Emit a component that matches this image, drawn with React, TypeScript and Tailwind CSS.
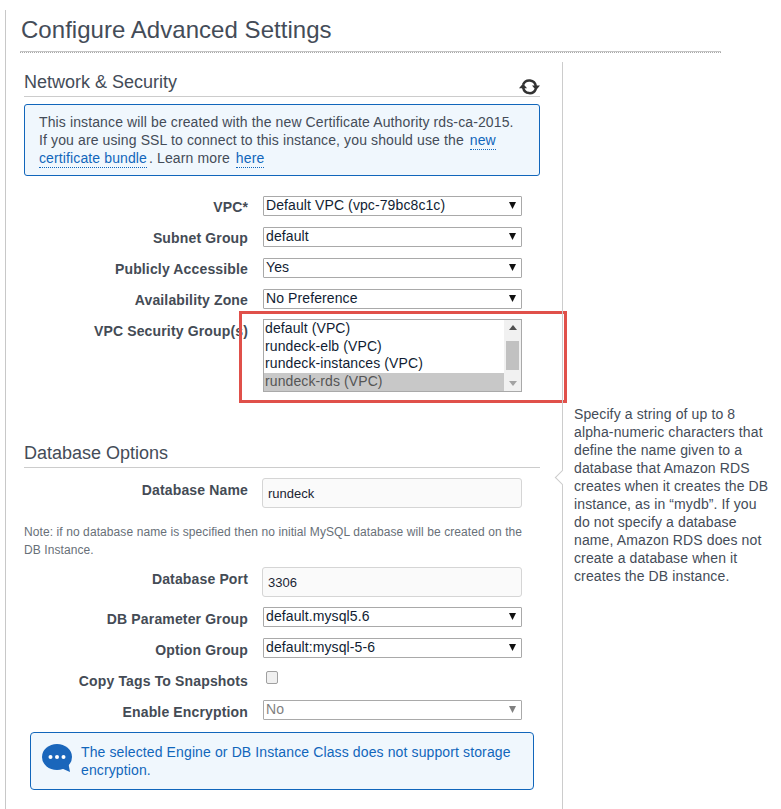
const Caret = ({ disabled }: { disabled?: boolean }) => (
  <svg width="7" height="7" viewBox="0 0 7 7" className="mb-[2px] shrink-0">
    <path d="M0 0h7L3.5 7z" fill={disabled ? "#808080" : "#111111"} />
  </svg>
);

const Select = ({ value, disabled }: { value: string; disabled?: boolean }) => (
  <div
    className={`flex h-[20px] w-[259px] items-center justify-between rounded-[1px] border border-[#a9a9a9] bg-white pl-[2px] pr-[5px] text-[14px] leading-[16px] tracking-[0.1px] ${
      disabled ? "text-[#808080]" : "text-[#111d33]"
    }`}
  >
    <span className="-mt-[2px]">{value}</span>
    <Caret disabled={disabled} />
  </div>
);

const Row = ({
  label,
  children,
  top,
  raised,
}: {
  label: string;
  children: React.ReactNode;
  top?: boolean;
  raised?: boolean;
}) => (
  <div className={`flex gap-[15px] ${top ? "items-start" : "items-center"}`}>
    <div
      className={`h-[20px] w-[224px] text-right text-[14px] font-bold tracking-[0.15px] text-[#444b55] ${
        raised ? "leading-[22px]" : "leading-[24px]"
      }`}
    >
      {label}
    </div>
    {children}
  </div>
);

const TextInput = ({ value }: { value: string }) => (
  <div className="-ml-px flex h-[30px] w-[260px] items-center rounded-[3px] border border-[#d5d5d5] bg-[#fafafa] px-[5px] pt-[2px] text-[13px] text-[#1a2433]">
    {value}
  </div>
);

const Heading = ({ title, icon }: { title: string; icon?: React.ReactNode }) => (
  <div className="flex items-end justify-between border-b border-[#cccccc] pb-[2px]">
    <h2 className="text-[18px] font-normal leading-[24px] text-[#444c58]">{title}</h2>
    {icon}
  </div>
);

const RefreshIcon = () => (
  <svg width="21" height="18" viewBox="0 0 21 18" className="-mb-[2px] shrink-0">
    <path d="M4.2 6.5A6.6 6.6 0 0 1 16.8 8" fill="none" stroke="#333333" strokeWidth="2.5" />
    <path d="M16.8 11A6.6 6.6 0 0 1 4.2 9.8" fill="none" stroke="#333333" strokeWidth="2.5" />
    <path d="M13 7.6h8l-4 4.6z" fill="#333333" />
    <path d="M0 10.2h8L4 5.6z" fill="#333333" />
  </svg>
);

const securityGroups = ["default (VPC)", "rundeck-elb (VPC)", "rundeck-instances (VPC)"];

const linkClass = "border-b border-dotted border-[#1166bb] pb-[1px] text-[#1166bb]";

export default function App() {
  return (
    <div
      className="relative h-[809px] w-[781px] overflow-hidden bg-white"
      style={{ fontFamily: '"Liberation Sans", Arial, sans-serif' }}
    >
      <div className="ml-[5px] h-[799px] translate-y-[10px] border-l border-[#c8c8c8]">
        <div className="ml-[14px] w-[701px] border-b border-dotted border-[#a8a8a8]">
          <div className="border-b border-[#c4c4c4] pl-[1px] pt-[5px] pb-[6px]">
            <h1 className="text-[24px] font-normal leading-[30px] tracking-[0.04px] text-[#444c58]">
              Configure Advanced Settings
            </h1>
          </div>
        </div>

        <div className="ml-[18px] mt-[9px] flex">
          {/* Form column */}
          <div className="w-[516px] pt-[8px]">
            <Heading title="Network & Security" icon={<RefreshIcon />} />

            <div className="mt-[7px] rounded-[3px] border border-[#1166bb] bg-[#f0f7fd] px-[14px] py-[8px] text-[14px] leading-[18px] tracking-[0.12px] text-[#444c58]">
              This instance will be created with the new Certificate Authority rds-ca-2015.
              <br />
              If you are using SSL to connect to this instance, you should use the{" "}
              <a className={`ml-[2px] ${linkClass}`}>new</a>
              <br />
              <a className={linkClass}>certificate bundle</a>
              <span className="ml-[2px]">. Learn more</span> <a className={`ml-[2px] ${linkClass}`}>here</a>
            </div>

            <div className="mt-[20px] flex flex-col gap-[11px]">
              <Row label="VPC*" raised>
                <Select value="Default VPC (vpc-79bc8c1c)" />
              </Row>
              <Row label="Subnet Group" raised>
                <Select value="default" />
              </Row>
              <Row label="Publicly Accessible" raised>
                <Select value="Yes" />
              </Row>
              <Row label="Availability Zone" raised>
                <Select value="No Preference" />
              </Row>
            </div>

            <div className="relative mt-[10px]">
              <Row label="VPC Security Group(s)" top>
                <div className="flex h-[73px] w-[259px] border border-[#a9a9a9] bg-white">
                  <div className="min-w-0 flex-1 text-[14px] leading-[17px] tracking-[0.1px] text-[#111d33]">
                    {securityGroups.map((group) => (
                      <div key={group} className="h-[17.7px] pl-[1px]">
                        {group}
                      </div>
                    ))}
                    <div className="h-[18px] bg-[#c8c8c8] pl-[1px] text-[#555555]">rundeck-rds (VPC)</div>
                  </div>
                  <div className="flex w-[17px] flex-col items-center justify-between bg-[#f1f1f1] py-[5px]">
                    <svg width="8" height="5" viewBox="0 0 8 5" className="mb-[10px]">
                      <path d="M0 5L4 0l4 5z" fill="#505050" />
                    </svg>
                    <div className="h-[29px] w-[13px] bg-[#c1c1c1]" />
                    <svg width="8" height="5" viewBox="0 0 8 5" className="mt-[10px]">
                      <path d="M0 0h8L4 5z" fill="#a3a3a3" />
                    </svg>
                  </div>
                </div>
              </Row>
              {/* Red highlight drawn over the screenshot */}
              <div className="absolute left-[215px] top-[-8px] h-[92px] w-[328px] border-[3px] border-[#e0504a]" />
            </div>

            <div className="mt-[49px]">
              <Heading title="Database Options" />
            </div>

            <div className="mt-[10px]">
              <Row label="Database Name" top>
                <TextInput value="rundeck" />
              </Row>
            </div>

            <p className="mt-[15px] pr-[10px] text-[12px] leading-[18px] tracking-[0.09px] text-[#687078]">
              Note: if no database name is specified then no initial MySQL database will be created on the DB Instance.
            </p>

            <div className="mt-[8px]">
              <Row label="Database Port" top>
                <TextInput value="3306" />
              </Row>
            </div>

            <div className="mt-[10px] flex flex-col gap-[11px]">
              <Row label="DB Parameter Group">
                <Select value="default.mysql5.6" />
              </Row>
              <Row label="Option Group">
                <Select value="default:mysql-5-6" />
              </Row>
              <Row label="Copy Tags To Snapshots">
                <div className="mb-[3px] ml-[3px] h-[13px] w-[12px] rounded-[2px] border border-[#a0a0a0] bg-[#f0f0f0]" />
              </Row>
              <Row label="Enable Encryption">
                <Select value="No" disabled />
              </Row>
            </div>

            <div className="mx-[6px] mt-[12px] flex h-[58px] gap-[9px] rounded-[4px] border border-[#1166bb] bg-[#f0f7fd] pl-[11px] pr-[12px] pt-[10px] text-[14px] leading-[18px] tracking-[0.12px] text-[#1166bb]">
              <svg width="30" height="29" viewBox="0 0 30 29" className="mt-[1px] shrink-0">
                <ellipse cx="15" cy="13" rx="15" ry="13" fill="#1a66bb" />
                <path d="M19 24l9 4-2-11z" fill="#1a66bb" />
                <circle cx="8.5" cy="13" r="2" fill="#ffffff" />
                <circle cx="15" cy="13" r="2" fill="#ffffff" />
                <circle cx="21.5" cy="13" r="2" fill="#ffffff" />
              </svg>
              <div>The selected Engine or DB Instance Class does not support storage encryption.</div>
            </div>
          </div>

          {/* Help panel */}
          <div className="relative ml-[22px] h-[800px] w-[200px] border-l border-[#cccccc] pl-[11px] pt-[343px]">
            <p className="w-[195px] text-[14px] leading-[18px] tracking-[0.12px] text-[#444c58]">
              Specify a string of up to 8 alpha-numeric characters that define the name given to a database that Amazon
              RDS creates when it creates the DB instance, as in “mydb”. If you do not specify a database name, Amazon
              RDS does not create a database when it creates the DB instance.
            </p>
            <div className="absolute left-[-6px] top-[410px] h-[11px] w-[11px] rotate-45 border-b border-l border-[#cccccc] bg-white" />
          </div>
        </div>
      </div>
    </div>
  );
}
